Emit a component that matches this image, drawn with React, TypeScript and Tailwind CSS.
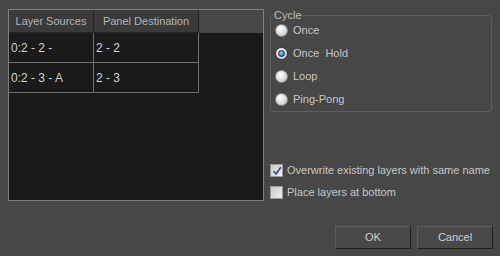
const rows = [
  { src: "0:2 - 2 -", dst: "2 - 2" },
  { src: "0:2 - 3 - A", dst: "2 - 3" },
];

const cycles = ["Once", "Once\u00a0\u00a0Hold", "Loop", "Ping-Pong"];

const Radio = ({ checked }: { checked: boolean }) => (
  <span
    className={
      "flex h-[13px] w-[13px] items-center justify-center rounded-full border " +
      (checked
        ? "border-[#3a3a3a] bg-[radial-gradient(circle_at_40%_35%,#ffffff,#b8b8b8)]"
        : "border-[#8c8c8c] bg-[radial-gradient(circle_at_40%_35%,#ffffff,#bdbdbd)]")
    }
  >
    {checked && (
      <span className="h-[7px] w-[7px] rounded-full border border-[#0b2a55] bg-[radial-gradient(circle_at_40%_35%,#7fd0ff,#0a63b8)]" />
    )}
  </span>
);

const Checkbox = ({ checked }: { checked: boolean }) => (
  <span className="flex h-[13px] w-[13px] items-center justify-center border border-[#9a9a9a] bg-gradient-to-br from-[#c8c8c8] to-[#f0f0f0]">
    {checked && (
      <svg width="10" height="10" viewBox="0 0 10 10">
        <path d="M1.5 5.2 L4 8 L8.8 1.2" fill="none" stroke="#2c46b0" strokeWidth="1.6" />
      </svg>
    )}
  </span>
);

export default function App() {
  return (
    <div className="flex h-[256px] w-[500px] bg-[#474747] font-['Liberation_Sans',Arial,sans-serif] text-[11px] text-[#c6c6c6]">
      {/* LEFT: layer table */}
      <div className="ml-[8px] mt-[9px] h-[192px] w-[256px] border border-[#808080] bg-[#1a1a1a]">
        <div className="flex h-[23px] bg-[#474747]">
          <div className="flex w-[85px] items-center justify-center border-r border-b border-[#222] bg-[#3a3a3a] text-[#b4b4b4]">
            Layer Sources
          </div>
          <div className="flex w-[105px] items-center justify-center border-r border-b border-[#222] bg-[#3a3a3a] text-[#b4b4b4]">
            Panel Destination
          </div>
        </div>
        {rows.map((r) => (
          <div key={r.src} className="flex h-[30px] w-[190px] border-b border-[#6e6e6e] text-[12px] text-[#d2d2d2]">
            <div className="flex w-[85px] items-center border-r border-[#6e6e6e] pl-[2px]">{r.src}</div>
            <div className="flex w-[105px] items-center border-r border-[#6e6e6e] pl-[2px]">{r.dst}</div>
          </div>
        ))}
      </div>

      {/* RIGHT: options */}
      <div className="ml-[6px] flex w-[222px] flex-col">
        <div className="relative mt-[15px] h-[97px] rounded-[3px] border border-[#5e5e5e]">
          <span className="absolute -top-[9px] left-[2px] bg-[#474747] px-[1px] text-[#bdbdbd]">Cycle</span>
          <div className="flex flex-col gap-[10px] pl-[4px] pt-[8px]">
            {cycles.map((c, i) => (
              <div key={c} className="flex h-[13px] items-center gap-[5px]">
                <Radio checked={i === 1} />
                <span>{c}</span>
              </div>
            ))}
          </div>
        </div>

        <div className="mt-[52px] flex flex-col gap-[9px]">
          <div className="flex h-[13px] items-center gap-[4px]">
            <Checkbox checked />
            <span>Overwrite existing layers with same name</span>
          </div>
          <div className="flex h-[13px] items-center gap-[4px]">
            <Checkbox checked={false} />
            <span>Place layers at bottom</span>
          </div>
        </div>

        <div className="mb-[7px] mt-auto flex justify-end gap-[6px]">
          <button className="h-[23px] w-[76px] border border-t-[#5c5c5c] border-l-[#5c5c5c] border-r-[#202020] border-b-[#202020] bg-[#484848] text-[#d0d0d0]">
            OK
          </button>
          <button className="-mr-[1px] h-[23px] w-[76px] border border-t-[#5c5c5c] border-l-[#5c5c5c] border-r-[#202020] border-b-[#202020] bg-[#484848] text-[#d0d0d0]">
            Cancel
          </button>
        </div>
      </div>
    </div>
  );
}
